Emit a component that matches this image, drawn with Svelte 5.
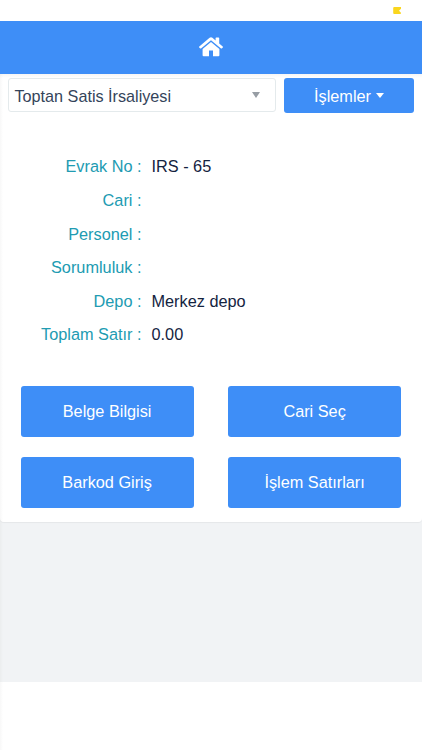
<script>
  let documentType = $state("Toptan Satis İrsaliyesi");

  const fields = [
    { label: "Evrak No", value: "IRS - 65" },
    { label: "Cari", value: "" },
    { label: "Personel", value: "" },
    { label: "Sorumluluk", value: "" },
    { label: "Depo", value: "Merkez depo" },
    { label: "Toplam Satır", value: "0.00" },
  ];

  const actions = ["Belge Bilgisi", "Cari Seç", "Barkod Giriş", "İşlem Satırları"];
</script>

<div class="screen">
  <div class="status-bar">
    <svg class="battery" width="8" height="8" viewBox="0 0 8 8">
      <path
        d="M1.2 0H8V1.8L6 3.8L7.8 5.4V7H1.2Q0.2 7 0.2 6V1Q0.2 0 1.2 0Z"
        fill="#fad61e"
      />
    </svg>
  </div>

  <header class="navbar">
    <svg class="home" width="24" height="20" viewBox="0 0 24 20" fill="#fff">
      <path
        d="M12 5L3.6 12V18.2Q3.6 19.2 4.6 19.2H10V13.4H14V19.2H19.4Q20.4 19.2 20.4 18.2V12Z"
      />
      <path
        d="M10.6 0.7Q12 -0.4 13.4 0.7L16.6 3.4V1.1Q16.6 0.4 17.3 0.4H19.5Q20.2 0.4 20.2 1.1V6.5L23.7 9.4Q24.2 9.9 23.8 10.4L23 11.3Q22.5 11.8 22 11.4L12 3.2L2 11.4Q1.5 11.8 1 11.3L0.2 10.4Q-0.2 9.9 0.3 9.4Z"
      />
    </svg>
  </header>

  <main class="content">
    <section class="card">
      <div class="toolbar">
        <button class="select">
          <span>{documentType}</span>
          <span class="select-arrow"></span>
        </button>
        <button class="btn dropdown">İşlemler <span class="caret"></span></button>
      </div>

      <div class="details">
        {#each fields as field}
          <div class="row">
            <div class="label">{field.label} :</div>
            <div class="value">{field.value}</div>
          </div>
        {/each}
      </div>

      <div class="actions">
        {#each actions as action}
          <button class="btn">{action}</button>
        {/each}
      </div>
    </section>
  </main>
</div>

<style>
  :global(body) {
    background: #fff;
  }

  .screen {
    box-sizing: border-box;
    height: 750px;
    overflow: hidden;
    font-family: "Liberation Sans", Arial, sans-serif;
    font-size: 16.3px;
    color: #14233f;
    background: linear-gradient(to right, #f8f8f8, #fff 3px);
  }

  .status-bar {
    box-sizing: border-box;
    height: 21px;
    padding: 7px 21px 0 0;
    display: flex;
    justify-content: flex-end;
    align-items: flex-start;
    background: #fff;
  }

  .navbar {
    height: 53px;
    display: flex;
    align-items: center;
    justify-content: center;
    background: #3e8ef7;
  }

  .home {
    margin-bottom: 1px;
  }

  .content {
    height: 608px;
    background: linear-gradient(to right, #ebedee, #f1f3f5 3px);
  }

  .card {
    box-sizing: border-box;
    height: 448px;
    padding: 4px 8px 0;
    background:
      linear-gradient(to bottom, rgba(0, 0, 0, 0.04), transparent 4px),
      linear-gradient(to right, #f8f8f8, #fff 3px);
    border-radius: 0 0 4px 4px;
    box-shadow: 0 1px 1px rgba(0, 0, 0, 0.05);
  }

  button {
    font: inherit;
    cursor: pointer;
  }

  .toolbar {
    display: grid;
    grid-template-columns: 268px 130px;
    gap: 8px;
    align-items: start;
  }

  .select {
    box-sizing: border-box;
    height: 34px;
    padding: 2px 15px 0 5.5px;
    display: flex;
    align-items: center;
    justify-content: space-between;
    font-size: 16.2px;
    color: #34445a;
    background: #fff;
    border: 1px solid #e4eaec;
    border-radius: 3px;
  }

  .select-arrow {
    margin-bottom: 2px;
    border: 4px solid transparent;
    border-top: 6px solid #979da4;
    border-bottom: 0;
  }

  .btn {
    padding: 0;
    color: #fff;
    background: #3e8ef7;
    border: 0;
    border-radius: 3px;
  }

  .dropdown {
    height: 35px;
    padding-top: 1px;
    display: flex;
    align-items: center;
    justify-content: center;
    gap: 5px;
  }

  .caret {
    margin-bottom: 1px;
    border: 4.5px solid transparent;
    border-top: 5px solid #fff;
    border-bottom: 0;
  }

  .details {
    margin-top: 37.2px;
  }

  .row {
    height: 33.6px;
    display: grid;
    grid-template-columns: 133.5px 1fr;
    column-gap: 10px;
    align-items: center;
  }

  .label {
    text-align: right;
    color: #219bb2;
  }

  .actions {
    margin: 33.8px 12.6px 0;
    display: grid;
    grid-template-columns: 173px 173px;
    grid-auto-rows: 51px;
    gap: 20px 34.5px;
  }
</style>
